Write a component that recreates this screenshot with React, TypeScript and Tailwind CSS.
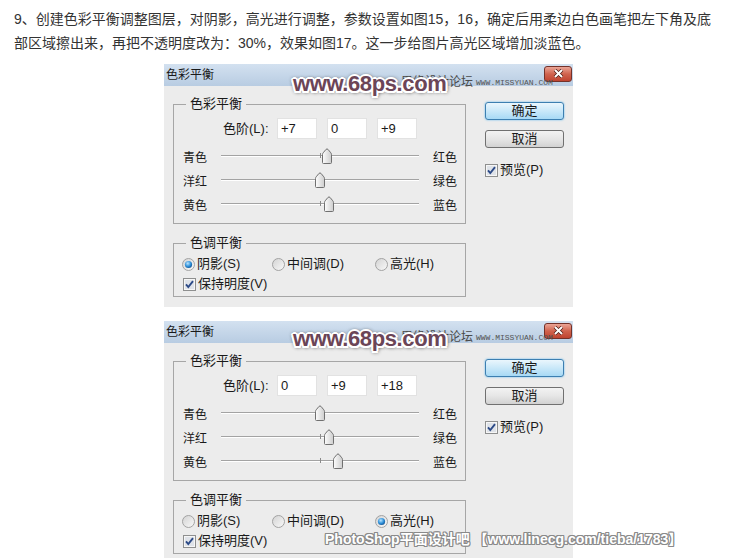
import React from 'react';

type DialogProps = {
  levels: string[];
  values: number[];
  tone: number;
};

const SLIDERS = [
  ['青色', '红色'],
  ['洋红', '绿色'],
  ['黄色', '蓝色'],
];

const TONES = ['阴影(S)', '中间调(D)', '高光(H)'];
const TONE_W = ['w-[90px]', 'w-[103px]', 'w-[80px]'];

function Thumb() {
  return (
    <svg width="10" height="16" viewBox="0 0 10 16">
      <defs>
        <linearGradient id="thumbFill" x1="0" y1="0" x2="1" y2="0">
          <stop offset="0" stopColor="#fdfdfd" />
          <stop offset="1" stopColor="#cdcdcd" />
        </linearGradient>
      </defs>
      <path
        d="M1.5 15.5 Q0.5 15.5 0.5 14.5 V6.5 Q0.5 5.6 1.2 4.8 L4 1.4 Q5 0.4 6 1.4 L8.8 4.8 Q9.5 5.6 9.5 6.5 V14.5 Q9.5 15.5 8.5 15.5 Z"
        fill="url(#thumbFill)"
        stroke="#707070"
      />
    </svg>
  );
}

function CheckBox() {
  return (
    <svg width="13" height="13" viewBox="0 0 13 13" className="shrink-0">
      <rect x="0.5" y="0.5" width="12" height="12" fill="#f6f6f6" stroke="#8e8f8f" />
      <rect x="2" y="2" width="9" height="9" fill="#dfe3e9" />
      <path d="M3 6.3 L5.3 9 L10 3.2" fill="none" stroke="#2c4a87" strokeWidth="1.9" />
    </svg>
  );
}

function Radio({ on }: { on: boolean }) {
  return (
    <svg width="13" height="13" viewBox="0 0 13 13" className="shrink-0">
      <defs>
        <radialGradient id="radioDot" cx="0.4" cy="0.35" r="0.7">
          <stop offset="0" stopColor="#b9e4ff" />
          <stop offset="0.6" stopColor="#2d8fd8" />
          <stop offset="1" stopColor="#13508f" />
        </radialGradient>
        <linearGradient id="radioBg" x1="0" y1="0" x2="1" y2="1">
          <stop offset="0" stopColor="#d2d2d2" />
          <stop offset="1" stopColor="#fafafa" />
        </linearGradient>
      </defs>
      <circle cx="6.5" cy="6.5" r="6" fill="url(#radioBg)" stroke="#a2a2a2" />
      {on && <circle cx="6.5" cy="6.5" r="3.6" fill="url(#radioDot)" />}
    </svg>
  );
}

function Dialog({ levels, values, tone }: DialogProps) {
  return (
    <div className="ml-[164px] w-[409px] bg-[#ececec] text-[#1a1a1a]">
      <div className="h-[22px] flex items-center pl-[2px] bg-gradient-to-b from-[#d3e1f0] to-[#b8cce2] text-[12px]">
        <span>色彩平衡</span>
        <div className="ml-auto mr-[1px] -mt-[3px] w-[28px] h-[16px] rounded-[3px] border border-[#74322a] bg-gradient-to-b from-[#eaa597] via-[#d0634e] to-[#bf4330] flex items-center justify-center">
          <svg width="11" height="9" viewBox="0 0 11 9">
            <path d="M2 1 L9 8 M9 1 L2 8" stroke="#4a1a14" strokeWidth="3.4" />
            <path d="M2 1 L9 8 M9 1 L2 8" stroke="#fff" strokeWidth="2" />
          </svg>
        </div>
      </div>

      <div className="h-[221px] flex pl-[9px]">
        <div className="w-[293px] flex flex-col">
          {/* 色彩平衡 group */}
          <div className="mt-[18px] h-[120px] border border-[#a6a6a6] flex flex-col">
            <div className="-mt-[9px] ml-[12px] px-[4px] self-start bg-[#ececec] text-[13px] leading-[16px]">色彩平衡</div>
            <div className="mt-[6px] flex items-center pl-[49px] text-[13px]">
              <span className="w-[54px] whitespace-nowrap">色阶(L):</span>
              <div className="flex gap-[10px]">
                {levels.map((v, i) => (
                  <div key={i} className="w-[40px] h-[21px] bg-white border border-[#e2e2e2] pl-[3px] leading-[19px]">
                    {v}
                  </div>
                ))}
              </div>
            </div>
            <div className="mt-[7px] flex flex-col">
              {SLIDERS.map(([l, r], i) => (
                <div key={l} className="h-[24px] flex items-center pl-[9px] text-[12px]">
                  <span className="w-[38px]">{l}</span>
                  <div className="relative w-[198px] h-full">
                    <div className="absolute left-0 right-0 top-[9px] h-[2px] border-t border-[#a3a3a3] border-b border-b-white" />
                    <div className="absolute left-[99px] top-[7px] w-[1px] h-[5px] bg-[#8a8a8a]" />
                    <div className="absolute top-[2px]" style={{ left: 94 + values[i] * 0.99 }}>
                      <Thumb />
                    </div>
                  </div>
                  <span className="ml-[14px]">{r}</span>
                </div>
              ))}
            </div>
          </div>

          {/* 色调平衡 group */}
          <div className="mt-[19px] h-[54px] border border-[#a6a6a6] flex flex-col">
            <div className="-mt-[9px] ml-[12px] px-[4px] self-start bg-[#ececec] text-[13px] leading-[16px]">色调平衡</div>
            <div className="mt-[4px] h-[18px] flex items-center pl-[8px] text-[13px]">
              {TONES.map((t, i) => (
                <div key={t} className={`${TONE_W[i]} flex items-center gap-[2px]`}>
                  <Radio on={tone === i} />
                  <span>{t}</span>
                </div>
              ))}
            </div>
            <div className="mt-[2px] h-[18px] flex items-center gap-[2px] pl-[9px] text-[13px]">
              <CheckBox />
              <span>保持明度(V)</span>
            </div>
          </div>
        </div>

        {/* buttons */}
        <div className="ml-[19px] w-[79px] pt-[16px] flex flex-col text-[13px]">
          <div className="h-[18px] rounded-[3px] border border-[#3c7fb1] bg-gradient-to-b from-[#eaf6fd] via-[#c9e8f9] to-[#a7d9f5] shadow-[0_0_2px_#55b4ee] flex items-center justify-center">
            确定
          </div>
          <div className="mt-[10px] h-[18px] rounded-[3px] border border-[#707070] bg-gradient-to-b from-[#f3f3f3] via-[#e6e6e6] to-[#d2d2d2] flex items-center justify-center">
            取消
          </div>
          <div className="mt-[15px] h-[14px] flex items-center gap-[2px]">
            <CheckBox />
            <span>预览(P)</span>
          </div>
        </div>
      </div>
    </div>
  );
}

const MARK =
  "[text-shadow:2px_0_0_#fff,-2px_0_0_#fff,0_2px_0_#fff,0_-2px_0_#fff,1.5px_1.5px_0_#fff,-1.5px_1.5px_0_#fff,1.5px_-1.5px_0_#fff,-1.5px_-1.5px_0_#fff,0_0_4px_#333,1px_1px_4px_#333]";

function SiteMarks({ top }: { top: number }) {
  return (
    <>
      <div className="absolute left-[401px] text-[12px] leading-[12px] text-[#4a4a4a]" style={{ top: top + 3 }}>
        思缘设计论坛
      </div>
      <div className="absolute left-[476px] font-['Liberation_Mono',monospace] text-[8px] leading-[8px] text-[#555]" style={{ top: top + 6 }}>
        WWW.MISSYUAN.COM
      </div>
      <div
        className={`absolute left-[293px] font-['Liberation_Sans',sans-serif] font-bold text-[22px] leading-none tracking-[-0.4px] text-[#6b4557] ${MARK}`}
        style={{ top }}
      >
        www.68ps.com
      </div>
    </>
  );
}

export default function App() {
  return (
    <div className="relative w-[734px] h-[558px] overflow-hidden bg-white font-['Liberation_Sans','Noto_Sans_CJK_SC',sans-serif]">
      <p className="pl-[14px] pt-[7px] text-[14px] leading-[24px] text-[#333] whitespace-nowrap">
        9、创建色彩平衡调整图层，对阴影，高光进行调整，参数设置如图15，16，确定后用柔边白色画笔把左下角及底
        <br />
        部区域擦出来，再把不透明度改为：30%，效果如图17。这一步给图片高光区域增加淡蓝色。
      </p>

      <div className="mt-[9px]">
        <Dialog levels={['+7', '0', '+9']} values={[7, 0, 9]} tone={0} />
      </div>
      <div className="mt-[14px]">
        <Dialog levels={['0', '+9', '+18']} values={[0, 9, 18]} tone={2} />
      </div>

      <SiteMarks top={73} />
      <SiteMarks top={328} />

      <div className="absolute left-[325px] top-[531px] font-bold text-[14px] leading-[16px] text-white whitespace-nowrap [text-shadow:1px_0_0_#8a8a8a,-1px_0_0_#8a8a8a,0_1px_0_#8a8a8a,0_-1px_0_#8a8a8a,1px_1px_0_#8a8a8a,-1px_-1px_0_#8a8a8a,1px_-1px_0_#8a8a8a,-1px_1px_0_#8a8a8a]">
        PhotoShop平面设计吧 【www.linecg.com/tieba/1783】
      </div>
    </div>
  );
}
